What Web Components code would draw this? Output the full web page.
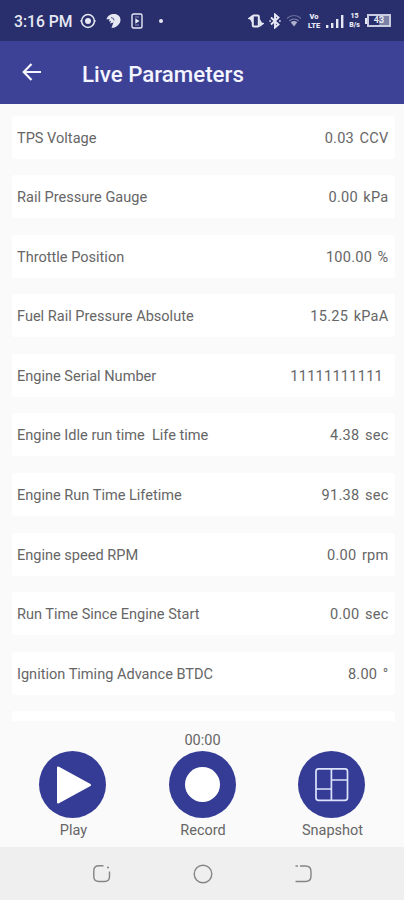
<!DOCTYPE html>
<html lang="en">
<head>
<meta charset="utf-8">
<meta name="viewport" content="width=device-width, initial-scale=1">
<title>Live Parameters</title>
<style>
  html, body { height: 100%; }
  body { margin: 0; overflow: hidden; font-family: Roboto, sans-serif; }
</style>
</head>
<body>
<live-screen>
  <status-bar slot="status" time="3:16 PM"></status-bar>
  <app-bar slot="header">Live Parameters</app-bar>
  <param-row value="0.03" unit="CCV">TPS Voltage</param-row>
  <param-row value="0.00" unit="kPa">Rail Pressure Gauge</param-row>
  <param-row value="100.00" unit="%">Throttle Position</param-row>
  <param-row value="15.25" unit="kPaA">Fuel Rail Pressure Absolute</param-row>
  <param-row value="11111111111" unit="">Engine Serial Number</param-row>
  <param-row value="4.38" unit="sec">Engine Idle run time&nbsp; Life time</param-row>
  <param-row value="91.38" unit="sec">Engine Run Time Lifetime</param-row>
  <param-row value="0.00" unit="rpm">Engine speed RPM</param-row>
  <param-row value="0.00" unit="sec">Run Time Since Engine Start</param-row>
  <param-row value="8.00" unit="°">Ignition Timing Advance BTDC</param-row>
  <param-row></param-row>
  <control-button slot="controls" icon="play">Play</control-button>
  <control-button slot="controls" icon="record" timer="00:00">Record</control-button>
  <control-button slot="controls" icon="snapshot">Snapshot</control-button>
  <nav-bar slot="nav"></nav-bar>
</live-screen>

<script>
const ICONS = {
  target: [16, 16, `<circle cx="8" cy="8" r="6.400" fill="none" stroke="currentColor" stroke-width="1.500"/>
    <circle cx="8" cy="8" r="3" fill="currentColor"/>
    <path d="M.5 8h1.500M14 8h1.500" stroke="currentColor" stroke-width="2"/>`],
  leaf: [15, 16, `<path d="M.5 6.500C1.500 2.500 4.500 1 8 1c4 0 6.500 2.500 6.500 6 0 3.500-3 6-6 7.500l-3 .5 1-3 1-2.500-3.500 1 1-2.500-2 .500 .5-2.500z" fill="currentColor"/>
    <path d="M5 4.500l2.500 1 .5 2" fill="none" stroke="#292e6c" stroke-width=".8"/>`],
  cast: [12, 16, `<rect x="1" y="1" width="10" height="14" rx="1.500" fill="none" stroke="currentColor" stroke-width="1.400"/>
    <path d="M4.300 5.200v5.600L8.500 8z" fill="currentColor"/><path d="M4 4h4M4 12h4" stroke="currentColor" opacity=".5"/>`],
  vibrate: [16, 14, `<rect x="4.800" y="1.500" width="6" height="11" rx="1" fill="none" stroke="currentColor" stroke-width="2"/>
    <path d="M.8 4.500L4 2v5.500L2.500 5zM15.200 9.500L12 12V6.500L13.500 9z" fill="currentColor" stroke="currentColor" stroke-width="1.200"/>`],
  bluetooth: [12, 16, `<path d="M2 4.500l7.500 7L6 14.500v-13l3.500 3-7.500 7" fill="none" stroke="currentColor" stroke-width="1.900"/>
    <path d="M.3 8h1.600M10.100 8h1.600" stroke="currentColor" stroke-width="1.600"/>`],
  wifi: [16, 13, `<g fill="none" stroke="currentColor" stroke-width="1.200"><path opacity=".35" d="M1 4.500c4-4 10-4 14 0"/>
    <path opacity=".45" d="M3.400 7c2.600-2.700 6.600-2.700 9.200 0"/></g>
    <path d="M4.700 8.300c2-1.700 4.600-1.700 6.600 0L8 12.500z" fill="currentColor" opacity=".7"/>`],
  signal: [18, 14, `<path d="M0 11h2.400v3H0zM5 9h2.400v5H5zM10 5h2.400v9H10zM15 1h2.400v13H15z" fill="currentColor"/>`],
  back: [20, 20, `<path d="M19 10H2M9.500 2L1.700 10l7.800 8" fill="none" stroke="currentColor" stroke-width="2.200"/>`],
  play: [67, 67, `<path d="M19 16.500v35L51 34z" fill="#fff" stroke="#fff" stroke-width="2" stroke-linejoin="round"/>`],
  record: [67, 67, `<circle cx="33.500" cy="33.500" r="17.500" fill="#fff"/>`],
  snapshot: [67, 67, `<g fill="none" stroke="#dde3fa" stroke-width="1.700"><rect x="18" y="17.800" width="31.500" height="31.500" rx="2.500"/>
    <path d="M33.400 18v31M18 38h15.400M33.400 29h16"/></g>`],
  recents: [20, 20, `<path d="M11.500 1.800H7Q1.800 1.800 1.800 7v5.500Q1.800 17.500 7 17.500h5.500Q17.500 17.500 17.500 12.500V7.500" fill="none" stroke="currentColor" stroke-width="1.400"/>
    <circle cx="16" cy="3.500" r="1" fill="currentColor"/>`],
  home: [20, 20, `<circle cx="10" cy="10" r="8.800" fill="none" stroke="currentColor" stroke-width="1.400"/>`],
  undo: [20, 20, `<path d="M6 2h5.500q5.500 0 5.500 5.500v4.500q0 5.500-5.500 5.500H1.500" fill="none" stroke="currentColor" stroke-width="1.400"/>
    <path d="M1.500 2h2.500" stroke="currentColor" stroke-width="1.400"/>`]
};

class UiIcon extends HTMLElement {
  constructor() {
    super();
    this.attachShadow({ mode: "open" });
  }

  connectedCallback() {
    const [w, h, body] = ICONS[this.getAttribute("name")];
    this.shadowRoot.innerHTML = `
      <style>
        :host { display: block; flex: none; }
        svg { display: block; }
      </style>
      <svg width="${w}" height="${h}" viewBox="0 0 ${w} ${h}">${body}</svg>
    `;
  }
}

class LiveScreen extends HTMLElement {
  constructor() {
    super();
    this.attachShadow({ mode: "open" });
    this.shadowRoot.innerHTML = `
      <style>
        :host {
          display: grid;
          grid-template-rows: 41px 63px 617px 126px 53px;
          height: 900px;
          background: #fafafa;
        }
        main {
          display: flex;
          flex-direction: column;
          gap: 16.600px;
          padding: 11.500px 9px 0 12px;
          overflow: hidden;
        }
        footer {
          display: grid;
          grid-template-columns: repeat(3, 129.500px);
          justify-content: center;
        }
      </style>
      <slot name="status"></slot>
      <slot name="header"></slot>
      <main><slot></slot></main>
      <footer><slot name="controls"></slot></footer>
      <slot name="nav"></slot>
    `;
  }
}

class StatusBar extends HTMLElement {
  constructor() {
    super();
    this.attachShadow({ mode: "open" });
  }

  connectedCallback() {
    this.shadowRoot.innerHTML = `
      <style>
        :host {
          display: flex;
          justify-content: space-between;
          box-sizing: border-box;
          padding: 0 13px 0 14px;
          background: #292e6c;
          color: #e6e9f4;
        }
        .side { display: flex; align-items: center; }
        .time { width: 66px; padding-top: 2px; font-size: 15.700px; font-weight: 500; white-space: nowrap; }
        .left { gap: 10px; }
        .left .time { margin-right: -10px; }
        .dot { width: 4px; height: 4px; margin-left: 6px; border-radius: 50%; background: currentColor; }
        .right { gap: 5px; }
        .stack { display: grid; grid-auto-rows: 9px; width: 14px; font-size: 7.500px; line-height: 9px; font-weight: 900; text-align: center; }
        .rate { width: 11px; font-size: 7px; }
        .battery {
          display: flex;
          align-items: center;
        }
        .battery::before { content: ""; width: 2px; height: 6px; background: currentColor; }
        .cell {
          box-sizing: border-box;
          width: 24px;
          height: 13px;
          border: 2px solid #c9cce0;
          background: linear-gradient(90deg, #292e6c 52%, #7b80a6 52%);
          font-size: 9px;
          line-height: 9.500px;
          font-weight: 700;
          text-align: center;
        }
      </style>
      <div class="side left">
        <span class="time">${this.getAttribute("time")}</span>
        <ui-icon name="target"></ui-icon>
        <ui-icon name="leaf"></ui-icon>
        <ui-icon name="cast"></ui-icon>
        <span class="dot"></span>
      </div>
      <div class="side right">
        <ui-icon name="vibrate"></ui-icon>
        <ui-icon name="bluetooth"></ui-icon>
        <ui-icon name="wifi"></ui-icon>
        <span class="stack"><span>Vo</span><span>LTE</span></span>
        <ui-icon name="signal"></ui-icon>
        <span class="stack rate"><span>15</span><span>B/s</span></span>
        <span class="battery"><span class="cell">43</span></span>
      </div>
    `;
  }
}

class AppBar extends HTMLElement {
  constructor() {
    super();
    this.attachShadow({ mode: "open" });
    this.shadowRoot.innerHTML = `
      <style>
        :host {
          display: flex;
          align-items: center;
          gap: 40px;
          box-sizing: border-box;
          padding: 2px 22px 0;
          background: #3d4297;
          color: #f4f5ff;
          font-size: 22.300px;
          font-weight: 500;
        }
        ui-icon { margin-top: -3px; }
      </style>
      <ui-icon name="back"></ui-icon>
      <span><slot></slot></span>
    `;
  }
}

class ParamRow extends HTMLElement {
  constructor() {
    super();
    this.attachShadow({ mode: "open" });
  }

  connectedCallback() {
    const value = this.getAttribute("value") || "";
    const unit = this.getAttribute("unit") || "";
    this.shadowRoot.innerHTML = `
      <style>
        :host {
          display: flex;
          flex: none;
          align-items: center;
          justify-content: space-between;
          box-sizing: border-box;
          height: 43px;
          padding: 2px 6.500px 0 5px;
          border-radius: 3px;
          background: #fff;
          color: #666;
          font-size: 14.550px;
          white-space: nowrap;
        }
        .reading { display: flex; gap: 5.500px; letter-spacing: .250px; }
      </style>
      <span><slot></slot></span>
      <span class="reading"><span>${value}</span><span>${unit}</span></span>
    `;
  }
}

class ControlButton extends HTMLElement {
  constructor() {
    super();
    this.attachShadow({ mode: "open" });
  }

  connectedCallback() {
    this.shadowRoot.innerHTML = `
      <style>
        :host {
          display: grid;
          grid-template-rows: 20px 67px 20px;
          justify-items: center;
          align-content: start;
          padding-top: 10px;
          color: #666;
          font-size: 14.500px;
          line-height: 20px;
        }
        .disc { width: 67px; height: 67px; border-radius: 50%; background: #343c96; }
        .timer { padding-left: 1px; }
        .label { padding: 3px 0 0 2px; }
      </style>
      <span class="timer">${this.getAttribute("timer") || ""}</span>
      <span class="disc"><ui-icon name="${this.getAttribute("icon")}"></ui-icon></span>
      <span class="label"><slot></slot></span>
    `;
  }
}

class NavBar extends HTMLElement {
  constructor() {
    super();
    this.attachShadow({ mode: "open" });
    this.shadowRoot.innerHTML = `
      <style>
        :host {
          display: flex;
          align-items: center;
          justify-content: center;
          gap: 81px;
          padding-left: 1px;
          background: #efefef;
          color: #858585;
        }
      </style>
      <ui-icon name="recents"></ui-icon>
      <ui-icon name="home"></ui-icon>
      <ui-icon name="undo"></ui-icon>
    `;
  }
}

customElements.define("ui-icon", UiIcon);
customElements.define("live-screen", LiveScreen);
customElements.define("status-bar", StatusBar);
customElements.define("app-bar", AppBar);
customElements.define("param-row", ParamRow);
customElements.define("control-button", ControlButton);
customElements.define("nav-bar", NavBar);
</script>
</body>
</html>
